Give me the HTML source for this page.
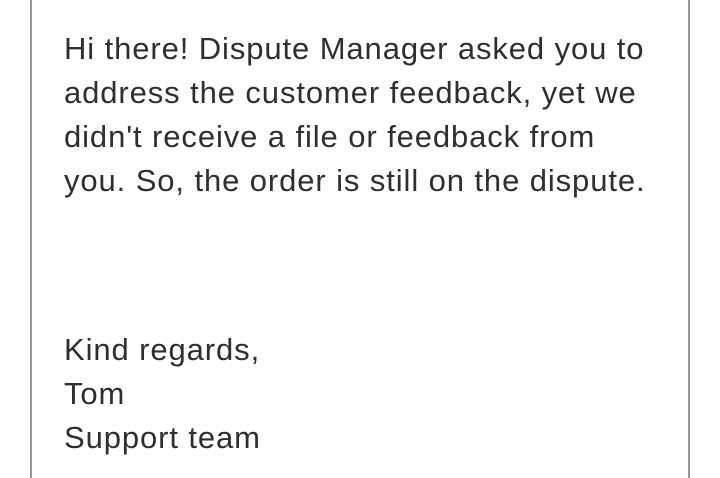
<!DOCTYPE html>
<html><head><style>
html,body{margin:0;padding:0;background:#fff;width:720px;height:467px;overflow:hidden;}
.box{position:absolute;left:30px;top:-2px;width:656px;height:480px;border-left:2px solid #9a9a9a;border-right:2px solid #9a9a9a;}
.t{position:absolute;left:64px;font-family:"Liberation Sans",sans-serif;font-size:31px;color:#2f2f2f;white-space:nowrap;letter-spacing:0.9px;line-height:1;}
</style></head><body>
<div class="box"></div>
<div class="t" style="top:33px">Hi there! Dispute Manager asked you to</div>
<div class="t" style="top:77px">address the customer feedback, yet we</div>
<div class="t" style="top:121px">didn't receive a file or feedback from</div>
<div class="t" style="top:165px">you. So, the order is still on the dispute.</div>
<div class="t" style="top:334px">Kind regards,</div>
<div class="t" style="top:378px">Tom</div>
<div class="t" style="top:422px">Support team</div>
</body></html>
